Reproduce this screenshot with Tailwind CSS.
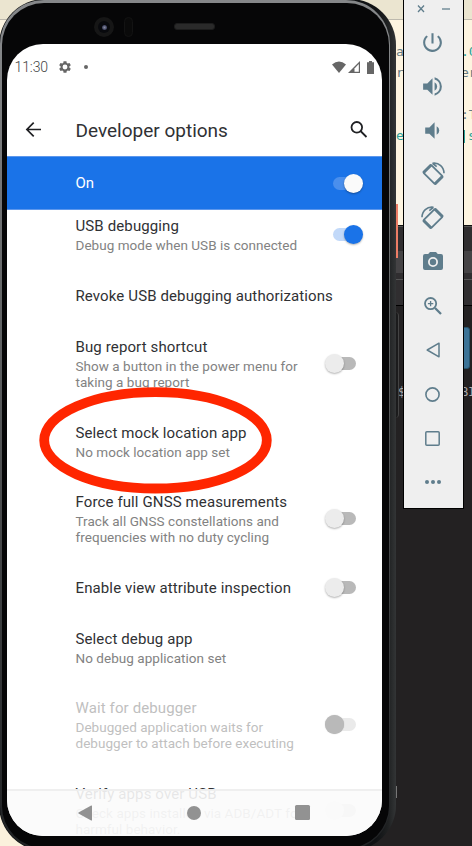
<!DOCTYPE html>
<html lang="en">
<head>
<meta charset="utf-8">
<title>Developer options</title>
<script src="https://cdn.jsdelivr.net/npm/@tailwindcss/browser@4"></script>
</head>
<body class="bg-[#232122]">
<div class="relative h-[846px] w-[472px] overflow-hidden bg-[#232122] font-[Roboto,sans-serif]">

  <!-- Editor windows behind the emulator -->
  <div class="absolute inset-0 flex flex-col">
    <div class="h-[19px] bg-[#ebe5d0]"></div>
    <div class="h-px bg-[#bdb9ad]"></div>
    <div class="h-[205px] bg-[#fdf4e0]"></div>
    <div class="h-px bg-[#111]"></div>
    <div class="h-[25px] border-t border-[#555] bg-[#302e30]"></div>
    <div class="h-[22px] bg-[#454345]"></div>
    <div class="h-[6px] bg-[#302e30]"></div>
    <div class="h-px bg-[#555]"></div>
    <div class="h-[25px] bg-[#302e30]"></div>
    <div class="h-px bg-black"></div>
    <div class="grow bg-[#232122]"></div>
  </div>
  <div class="absolute bottom-0 left-0 size-12 bg-[#fbf1dc]"></div>
  <div class="absolute left-[395px] top-[204px] h-[54px] w-[3px] bg-[#ed7d66]"></div>
  <div class="absolute left-[455px] top-[327px] h-[42px] w-[15px] rounded-[3px] border border-[#27546c] bg-[#3c7396]"></div>
  <div class="absolute left-[396px] top-0 w-2 whitespace-pre font-['DejaVu_Sans_Mono',monospace] text-[13px] leading-[21px] text-[#657b83]">
    <div class="absolute top-[41px]">a</div>
    <div class="absolute top-[62px]">r</div>
    <div class="absolute top-[125px] text-[#2aa198]">e</div>
    <div class="absolute left-[2px] top-[382px] text-[12px] text-[#aaa]">$</div>
  </div>
  <div class="absolute left-[462px] top-0 w-[10px] whitespace-pre font-['DejaVu_Sans_Mono',monospace] text-[13px] leading-[21px] text-[#657b83]">
    <div class="absolute -left-px top-[41px] text-[#2aa198]">.0</div>
    <div class="absolute -left-px top-[62px]">er</div>
    <div class="absolute -left-px top-[104px]">:T</div>
    <div class="absolute left-[6px] top-[125px] text-[#2aa198]">s</div>
    <div class="absolute left-[2px] top-[130px] h-[13px] w-px bg-[#2aa198]"></div>
    <div class="absolute -left-px top-[382px] text-[12px] text-[#aaa]">BI</div>
  </div>

  <!-- Side buttons of the device -->
  <div class="absolute left-[394px] top-[312px] h-[106px] w-[5px] rounded-r-sm border-r border-[#444] bg-[#1b1b1c]"></div>
  <div class="absolute left-[396px] top-[786px] h-3 w-px bg-[#777]"></div>

  <!-- Device body -->
  <div class="absolute -left-px -top-px h-[852px] w-[397px] rounded-[46px] bg-linear-to-r from-[#101214] from-95% via-[#1f2122] via-98% to-[#333536] pl-px pt-px pr-[6px] pb-px">
    <div class="h-full rounded-[44px] bg-linear-to-b from-[#858789] from-5% via-[#606263] via-40% to-[#202224] pl-[2px] pr-[1.500px] pt-[3px] pb-[2px]">
      <div class="h-full rounded-[42px] bg-[#060607]"></div>
    </div>
  </div>

  <!-- Camera, sensor, earpiece -->
  <div class="absolute left-[94px] top-[17px] flex size-5 items-center justify-center rounded-full bg-[#161616]">
    <div class="flex size-3 items-center justify-center rounded-full bg-[#08090d]"><div class="size-[5px] rounded-full bg-radial from-[#8a8ca0] to-[#1c2040]"></div></div>
  </div>
  <div class="absolute left-[124px] top-[17px] h-5 w-[9px] rounded-full border border-[#131313] bg-[#0a0a0a]"></div>
  <div class="absolute left-[174px] top-[23px] h-[7px] w-[41px] rounded-[3px] border border-[#1c1c1c] bg-[#2a2a2a]"></div>

  <!-- Screen -->
  <div class="absolute left-[7px] top-[44px] flex h-[792px] w-[375px] flex-col overflow-hidden rounded-[36px] bg-white">
    <div class="flex h-[46px] shrink-0 items-center pl-[7.5px] pr-[8px] text-[#666]">
      <span class="pt-px text-[14px] font-light tracking-[-0.100px] text-[#444]">11:30</span>
      <svg class="ml-[10px] size-[14px]" viewBox="0 0 24 24" fill="currentColor"><path fill-rule="evenodd" d="M19.6 13.1a8 8 0 0 0 0-2.2l2.4-1.9-2.3-4-2.9 1.1a7 7 0 0 0-1.8-1L14.500 2h-5L9 5.100a7 7 0 0 0-1.800 1L4.300 5 2 9l2.400 1.900a8 8 0 0 0 0 2.200L2 15l2.300 4 2.900-1.100a7 7 0 0 0 1.800 1l.5 3.100h5l.5-3.100a7 7 0 0 0 1.800-1l2.900 1.100 2.300-4zM12 16.200a4.200 4.200 0 1 1 0-8.400 4.200 4.200 0 0 1 0 8.400z"/></svg>
      <span class="ml-[12px] size-1 rounded-full bg-[#666]"></span>
      <svg class="ml-auto h-3 w-[14px]" viewBox="0 0 14 12" fill="currentColor"><path d="M0 3.500Q7-2.500 14 3.500L7 12z"/></svg>
      <svg class="ml-[2px] size-3" viewBox="0 0 12 12"><path d="M0 12 12 0v12z" fill="#666"/><path d="M6.500 7.500 10.800 3v7.800H6.500z" fill="#fff"/></svg>
      <svg class="ml-[7px] h-[13px] w-[7px]" viewBox="0 0 7 13" fill="currentColor"><path d="M2 0h3v1.200h2V13H0V1.200h2z"/></svg>
    </div>
    <div class="mt-[14px] flex h-[52px] shrink-0 items-center pl-[18px] pr-[14px] text-[#202124]">
      <svg class="mb-px size-[17px]" viewBox="0 0 17 17" fill="none" stroke="currentColor" stroke-width="1.700"><path d="M16 8.500H2M8.700 1.700 1.900 8.500l6.800 6.800"/></svg>
      <h1 class="ml-[33.500px] pt-[2px] text-[19px] text-[#303134]">Developer options</h1>
      <svg class="mb-[2px] ml-auto size-[19px]" viewBox="0 0 19 19" fill="none" stroke="currentColor" stroke-width="1.800"><circle cx="7.800" cy="7.300" r="5.300"/><path d="m11.500 11 6 6"/></svg>
    </div>
    <div class="relative z-10 flex h-[54px] shrink-0 items-center justify-between border-y border-[#5d97ec] bg-[#1a73e8] pl-[68.500px] pr-[19px] text-white">
      <span class="pt-px text-[15px]">On</span>
      <span class="relative flex h-5 w-[30px] items-center"><span class="h-[13px] w-[27px] rounded-full bg-[#4a8fed]"></span><span class="absolute right-0 size-[19px] rounded-full bg-[#fafafa] shadow-[0_1px_2px_rgba(0,0,0,.35)]"></span></span>
    </div>

    <div class="-mt-[9.500px] flex flex-col text-[15px] leading-5 text-[#303134]">
      <div class="relative h-[69.5px] pl-[68.500px] pt-[15.500px]">
        <div class="tracking-[0.12px]">USB debugging</div>
        <div class="pt-px text-[13.5px] leading-4 tracking-[0.04px] text-[#828282]">Debug mode when USB is connected</div>
        <span class="absolute right-[19px] top-[24px] flex h-5 w-[30px] items-center"><span class="h-[13px] w-[27px] rounded-full bg-[#c2d9f9]"></span><span class="absolute right-0 size-[19px] rounded-full bg-[#1a73e8] shadow-[0_1px_2px_rgba(0,0,0,.3)]"></span></span>
      </div>
      <div class="h-[51px] pl-[68.500px] pt-[15.500px] tracking-[0.12px]">Revoke USB debugging authorizations</div>
      <div class="relative h-[86px] pl-[68.500px] pt-[15.500px]">
        <div class="tracking-[0.12px]">Bug report shortcut</div>
        <div class="pt-px text-[13.5px] leading-4 tracking-[0.04px] text-[#828282]">Show a button in the power menu for<br>taking a bug report</div>
        <span class="absolute right-[26px] top-[32px] flex h-5 w-[31px] items-center justify-end"><span class="h-[13px] w-[27px] rounded-full bg-[#b9b9b9]"></span><span class="absolute left-0 size-[19px] rounded-full bg-[#ececec] shadow-[0_1px_2px_rgba(0,0,0,.3)]"></span></span>
      </div>
      <div class="h-[69.5px] pl-[68.500px] pt-[15.500px]">
        <div class="tracking-[0.12px]">Select mock location app</div>
        <div class="pt-px text-[13.5px] leading-4 tracking-[0.04px] text-[#828282]">No mock location app set</div>
      </div>
      <div class="relative h-[85.5px] pl-[68.500px] pt-[15.500px]">
        <div class="tracking-[0.12px]">Force full GNSS measurements</div>
        <div class="pt-px text-[13.5px] leading-4 tracking-[0.04px] text-[#828282]">Track all GNSS constellations and<br>frequencies with no duty cycling</div>
        <span class="absolute right-[26px] top-[32px] flex h-5 w-[31px] items-center justify-end"><span class="h-[13px] w-[27px] rounded-full bg-[#b9b9b9]"></span><span class="absolute left-0 size-[19px] rounded-full bg-[#ececec] shadow-[0_1px_2px_rgba(0,0,0,.3)]"></span></span>
      </div>
      <div class="relative h-[51px] pl-[68.500px] pt-[15.500px]">
        <div class="tracking-[0.12px]">Enable view attribute inspection</div>
        <span class="absolute right-[26px] top-[15px] flex h-5 w-[31px] items-center justify-end"><span class="h-[13px] w-[27px] rounded-full bg-[#b9b9b9]"></span><span class="absolute left-0 size-[19px] rounded-full bg-[#ececec] shadow-[0_1px_2px_rgba(0,0,0,.3)]"></span></span>
      </div>
      <div class="h-[69.5px] pl-[68.500px] pt-[15.500px]">
        <div class="tracking-[0.12px]">Select debug app</div>
        <div class="pt-px text-[13.5px] leading-4 tracking-[0.04px] text-[#828282]">No debug application set</div>
      </div>
      <div class="relative h-[85.5px] pl-[68.500px] pt-[15.500px] text-[#bfbfbf]">
        <div class="tracking-[0.12px]">Wait for debugger</div>
        <div class="pt-px text-[13.5px] leading-4 tracking-[0.04px]">Debugged application waits for<br>debugger to attach before executing</div>
        <span class="absolute right-[26px] top-[32px] flex h-5 w-[31px] items-center justify-end"><span class="h-[13px] w-[27px] rounded-full bg-[#eaeaea]"></span><span class="absolute left-0 size-[19px] rounded-full bg-[#b9b9b9] shadow-[0_0_1px_rgba(0,0,0,.3)]"></span></span>
      </div>
      <div class="relative h-[86px] pl-[68.500px] pt-[15.500px]">
        <div class="tracking-[0.12px]">Verify apps over USB</div>
        <div class="pt-px text-[13.5px] leading-4 tracking-[0.04px] text-[#9a9a9a]">Check apps installed via ADB/ADT for<br>harmful behavior.</div>
        <span class="absolute right-[26px] top-[32px] flex h-5 w-[31px] items-center justify-end"><span class="h-[13px] w-[27px] rounded-full bg-[#d4d4d4]"></span><span class="absolute left-0 size-[19px] rounded-full bg-[#f2f2f2]"></span></span>
      </div>
    </div>

    <!-- Translucent navigation bar -->
    <div class="absolute inset-x-0 bottom-0 z-20 flex h-[47px] items-center border-t-2 border-[#ededed]/90 bg-[#fbfbfb]/90 pb-[2px] pl-[71px] text-[#929292]">
      <svg class="h-4 w-[14px]" viewBox="0 0 14 16" fill="currentColor"><path d="M13.200.5Q14 .2 14 1v14q0 .8-.8.500L.5 8.500Q0 8 .5 7.500z"/></svg>
      <span class="ml-[95px] size-[14px] rounded-full bg-[#929292]"></span>
      <span class="ml-[94px] size-[14.500px] rounded-[1.500px] bg-[#929292]"></span>
    </div>
  </div>

  <!-- Red highlight ring -->
  <svg class="absolute left-[39px] top-[386px] h-[108px] w-[234px]" viewBox="0 0 234 108" fill="none" stroke="#ff2600" stroke-width="9.800"><ellipse cx="116.500" cy="54.300" rx="111.300" ry="48.200"/></svg>

  <!-- Emulator toolbar -->
  <div class="absolute left-[403px] top-0 flex h-[509px] w-[61px] flex-col border-x border-b border-black bg-[#efefef] pr-[2px] text-[#5f7d8c]">
    <div class="flex h-[18px] shrink-0 items-center gap-[17px] pl-[13px]">
      <svg class="size-[8px]" viewBox="0 0 8 8" fill="none" stroke="currentColor" stroke-width="1.300"><path d="m1 .5 6 6.500M7 .5 1 7"/></svg>
      <span class="h-[1.500px] w-[8px] bg-[#94a7b0]"></span>
    </div>
    <div class="mt-[2px] flex h-11 shrink-0 items-center justify-center"><svg class="size-[25px]" viewBox="0 0 24 24" fill="currentColor"><path d="M13 3h-2v10h2zm4.830 2.170-1.420 1.420A6.920 6.920 0 0 1 19 12a7 7 0 1 1-11.420-5.420L6.170 5.170A8.930 8.930 0 0 0 3 12a9 9 0 1 0 14.830-6.830z"/></svg></div>
    <div class="flex h-11 shrink-0 items-center justify-center"><svg class="size-[25px]" viewBox="0 0 24 24" fill="currentColor"><path d="M3 9v6h4l5 5V4L7 9zm13.500 3A4.500 4.500 0 0 0 14 7.970v8.050A4.470 4.470 0 0 0 16.500 12zM14 3.230v2.060a7 7 0 0 1 0 13.420v2.060a9 9 0 0 0 0-17.540z"/></svg></div>
    <div class="flex h-11 shrink-0 items-center justify-center"><svg class="size-[25px]" viewBox="0 0 24 24" fill="currentColor"><path d="M18.500 12A4.500 4.500 0 0 0 16 7.970v8.050A4.470 4.470 0 0 0 18.500 12zM5 9v6h4l5 5V4L9 9z"/></svg></div>
    <div class="flex h-11 shrink-0 items-center justify-center"><svg class="size-[26px]" viewBox="0 0 26 26" fill="none" stroke="currentColor"><g transform="translate(13 13.500) rotate(45)"><rect x="-8.500" y="-5.500" width="17" height="11" rx="1" stroke-width="1.800"/><path d="M-8-5.500v11M8-5.500v11" stroke-width="2.800"/></g><path d="M12.500 2.300C19 1.300 24 6 24 12.300M12.500 2.300l4.200 3.400" stroke-width="1.600"/></svg></div>
    <div class="flex h-11 shrink-0 items-center justify-center"><svg class="size-[26px] -scale-x-100" viewBox="0 0 26 26" fill="none" stroke="currentColor"><g transform="translate(13 13.500) rotate(45)"><rect x="-8.500" y="-5.500" width="17" height="11" rx="1" stroke-width="1.800"/><path d="M-8-5.500v11M8-5.500v11" stroke-width="2.800"/></g><path d="M12.500 2.300C19 1.300 24 6 24 12.300M12.500 2.300l4.200 3.400" stroke-width="1.600"/></svg></div>
    <div class="flex h-11 shrink-0 items-center justify-center pb-[2px]"><svg class="h-[18px] w-5" viewBox="0 0 20 18" fill="currentColor"><path fill-rule="evenodd" d="M7 0h6l1.800 2H18q2 0 2 2v12q0 2-2 2H2q-2 0-2-2V4q0-2 2-2h3.200zM10 5a5 5 0 1 0 0 10 5 5 0 0 0 0-10z"/><circle cx="10" cy="10" r="3.200"/></svg></div>
    <div class="flex h-11 shrink-0 items-center justify-center"><svg class="size-[18px]" viewBox="0 0 18 18" fill="none" stroke="currentColor" stroke-width="1.800"><circle cx="6.600" cy="6.600" r="5.600"/><path d="m11 11 6 6" stroke-width="2.300"/><path d="M6.600 3.900v5.400M3.900 6.600h5.400" stroke-width="1.300"/></svg></div>
    <div class="flex h-11 shrink-0 items-center justify-center"><svg class="h-4 w-[14px]" viewBox="0 0 14 16" fill="none" stroke="currentColor" stroke-width="1.500" stroke-linejoin="round"><path d="M13 1.200v13.600L1.200 8z"/></svg></div>
    <div class="flex h-11 shrink-0 items-center justify-center"><svg class="size-[15px]" viewBox="0 0 15 15" fill="none" stroke="currentColor" stroke-width="1.600"><circle cx="7.500" cy="7.500" r="6.600"/></svg></div>
    <div class="flex h-11 shrink-0 items-center justify-center"><svg class="size-[15px]" viewBox="0 0 15 15" fill="none" stroke="currentColor" stroke-width="1.500"><rect x=".8" y=".8" width="13.400" height="13.400" rx="1"/></svg></div>
    <div class="flex h-11 shrink-0 items-center justify-center gap-[2px]"><span class="size-1 rounded-full bg-[#5f7d8c]"></span><span class="size-1 rounded-full bg-[#5f7d8c]"></span><span class="size-1 rounded-full bg-[#5f7d8c]"></span></div>
  </div>
</div>
</body>
</html>
